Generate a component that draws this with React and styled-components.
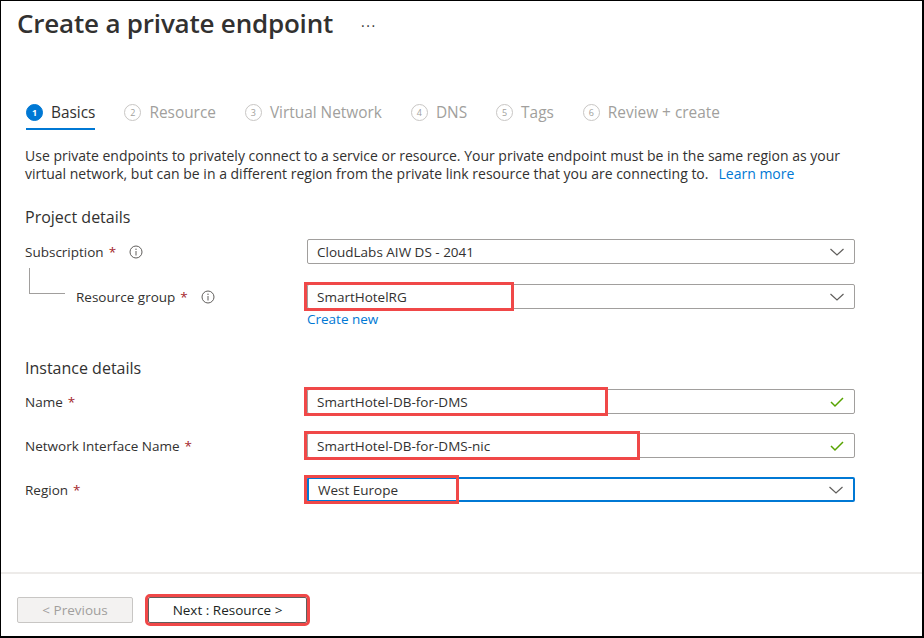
import React from "react";
import styled, { createGlobalStyle } from "styled-components";

const GlobalStyle = createGlobalStyle`
  html, body {
    margin: 0;
    padding: 0;
    background: #ffffff;
  }
  * {
    box-sizing: border-box;
  }
`;

const Frame = styled.div`
  width: 924px;
  height: 638px;
  display: flex;
  flex-direction: column;
  border-top: 1px solid #000;
  border-left: 1px solid #000;
  border-right: 2px solid #000;
  border-bottom: 2px solid #000;
  font-family: "Open Sans", "Noto Sans", sans-serif;
  color: #323130;
  background: #fff;
`;

const Header = styled.div`
  display: flex;
  align-items: center;
  padding: 2px 0 0 16px;
  height: 42px;
`;

const Title = styled.h1`
  margin: 0;
  font-size: 26px;
  font-weight: 600;
  line-height: 40px;
  color: #323130;
  letter-spacing: -0.2px;
`;

const More = styled.span`
  margin-left: 28px;
  font-size: 14px;
  color: #323130;
  letter-spacing: 1.5px;
  padding-top: 4px;
`;

const TabBar = styled.div`
  display: flex;
  gap: 29px;
  margin-top: 55px;
  padding-left: 25px;
`;

const Tab = styled.div`
  display: flex;
  align-items: center;
  gap: 8px;
  height: 32px;
  padding-bottom: 2px;
  border-bottom: 2px solid ${({ $active }) => ($active ? "#0078d4" : "transparent")};
  font-size: 15.4px;
  color: ${({ $active }) => ($active ? "#323130" : "#a19f9d")};
`;

const StepNum = styled.span`
  width: 17px;
  height: 17px;
  border-radius: 50%;
  display: inline-flex;
  align-items: center;
  justify-content: center;
  font-size: 9px;
  font-weight: ${({ $active }) => ($active ? 700 : 400)};
  background: ${({ $active }) => ($active ? "#0078d4" : "#fff")};
  color: ${({ $active }) => ($active ? "#fff" : "#a19f9d")};
  border: 1px solid ${({ $active }) => ($active ? "#0078d4" : "#c8c6c4")};
`;

const Body = styled.div`
  flex: 1;
  padding: 0 24px;
`;

const Intro = styled.p`
  margin: 17px 0 0;
  font-size: 14px;
  line-height: 18px;
  color: #323130;
  white-space: nowrap;
`;

const Link = styled.a`
  color: #0078d4;
  text-decoration: none;
  margin-left: ${({ $gap }) => $gap || 0}px;
`;

const Section = styled.h2`
  margin: ${({ $top }) => $top}px 0 0;
  font-size: 16px;
  font-weight: 400;
  line-height: 22px;
  color: #323130;
`;

const Row = styled.div`
  display: grid;
  grid-template-columns: 282px 548px;
  align-items: center;
  margin-top: ${({ $top }) => $top}px;
`;

const LabelCell = styled.div`
  display: flex;
  align-items: center;
  font-size: 13.5px;
  height: 25px;
`;

const Connector = styled.span`
  align-self: flex-start;
  width: 36px;
  height: 26px;
  margin: -16px 11px 0 4px;
  border-left: 1px solid #a19f9d;
  border-bottom: 1px solid #a19f9d;
`;

const Star = styled.span`
  color: #a4262c;
  margin-left: 5px;
`;

const InfoWrap = styled.span`
  display: inline-flex;
  margin-left: 13px;
`;

const Field = styled.div`
  position: relative;
`;

const Input = styled.div`
  height: 25px;
  display: flex;
  align-items: center;
  justify-content: space-between;
  padding: 0 9px 0 9px;
  border: ${({ $focus }) => ($focus ? "2px solid #0078d4" : "1px solid #a19f9d")};
  border-radius: 2px;
  font-size: 13.5px;
  color: #323130;
  background: #fff;
`;

const Highlight = styled.span`
  position: absolute;
  left: -3px;
  top: -2px;
  width: ${({ $w }) => $w}px;
  height: 29px;
  border: 3px solid #f04848;
  pointer-events: none;
`;

const CreateNew = styled.div`
  padding-left: 282px;
  margin-top: 1px;
  font-size: 13.5px;
  line-height: 18px;
`;

const Footer = styled.div`
  display: flex;
  gap: 15px;
  padding: 23px 16px 13px;
  border-top: 2px solid #edebe9;
`;

const Button = styled.button`
  height: 26px;
  width: ${({ $w }) => $w}px;
  font-family: "Open Sans", "Noto Sans", sans-serif;
  font-size: 13.5px;
  border-radius: 2px;
  border: 1px solid ${({ $primary }) => ($primary ? "#605e5c" : "#c8c6c4")};
  background: ${({ $primary }) => ($primary ? "#fff" : "#f3f2f1")};
  color: ${({ $primary }) => ($primary ? "#201f1e" : "#a19f9d")};
  outline: ${({ $marked }) => ($marked ? "3px solid #f04848" : "none")};
  outline-offset: 0;
  padding: 0;
`;

const Chevron = () => (
  <svg width="16" height="10" viewBox="0 0 16 10">
    <polyline points="1.5,2 8,8 14.5,2" fill="none" stroke="#605e5c" strokeWidth="1.2" />
  </svg>
);

const Check = () => (
  <svg width="16" height="12" viewBox="0 0 16 12">
    <polyline points="2,6 6,10 14,2" fill="none" stroke="#57a300" strokeWidth="1.5" />
  </svg>
);

const Info = () => (
  <svg width="14" height="14" viewBox="0 0 14 14">
    <circle cx="7" cy="7" r="6" fill="none" stroke="#605e5c" strokeWidth="1" />
    <line x1="7" y1="6" x2="7" y2="10.5" stroke="#605e5c" strokeWidth="1" />
    <circle cx="7" cy="4.2" r="0.7" fill="#605e5c" />
  </svg>
);

const steps = ["Basics", "Resource", "Virtual Network", "DNS", "Tags", "Review + create"];

const FormRow = ({ label, info, child, value, icon, mark, top, focus }) => (
  <Row $top={top}>
    <LabelCell>
      {child && <Connector />}
      {label}
      <Star>*</Star>
      {info && (
        <InfoWrap>
          <Info />
        </InfoWrap>
      )}
    </LabelCell>
    <Field>
      <Input $focus={focus}>
        <span>{value}</span>
        {icon === "check" ? <Check /> : <Chevron />}
      </Input>
      {mark && <Highlight $w={mark} />}
    </Field>
  </Row>
);

const App = () => {
  return (
    <>
      <GlobalStyle />
      <Frame>
        <Header>
          <Title>Create a private endpoint</Title>
          <More>···</More>
        </Header>

        <TabBar>
          {steps.map((s, i) => (
            <Tab key={s} $active={i === 0}>
              <StepNum $active={i === 0}>{i + 1}</StepNum>
              {s}
            </Tab>
          ))}
        </TabBar>

        <Body>
          <Intro>
            Use private endpoints to privately connect to a service or resource. Your private endpoint must be in the same region as your
            <br />
            virtual network, but can be in a different region from the private link resource that you are connecting to.
            <Link $gap={10}>Learn more</Link>
          </Intro>

          <Section $top={23}>Project details</Section>
          <FormRow top={11} label="Subscription" info value="CloudLabs AIW DS - 2041" />
          <FormRow top={20} child label="Resource group" info value="SmartHotelRG" mark={210} />
          <CreateNew>
            <Link>Create new</Link>
          </CreateNew>

          <Section $top={29}>Instance details</Section>
          <FormRow top={10} label="Name" value="SmartHotel-DB-for-DMS" icon="check" mark={304} />
          <FormRow top={19} label="Network Interface Name" value="SmartHotel-DB-for-DMS-nic" icon="check" mark={336} />
          <FormRow top={19} label="Region" value="West Europe" focus mark={155} />
        </Body>

        <Footer>
          <Button $w={116}>&lt; Previous</Button>
          <Button $w={159} $primary $marked>
            Next : Resource &gt;
          </Button>
        </Footer>
      </Frame>
    </>
  );
};

export default App;
